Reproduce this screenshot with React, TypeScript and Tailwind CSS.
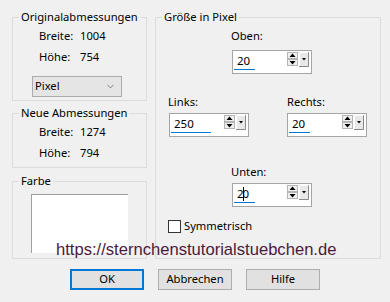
import { ChevronDown } from 'lucide-react';

const ui = { fontFamily: '"Noto Sans", "Open Sans", sans-serif' };

function SpinArrows() {
    return (
        <div className="flex items-start gap-[1px] mt-[1px]">
            <svg width="11" height="14" viewBox="0 0 11 14">
                <rect x="0.5" y="0.5" width="10" height="6" fill="#f0f0f0" stroke="#b5b5b5" />
                <rect x="0.5" y="7.5" width="10" height="6" fill="#f0f0f0" stroke="#b5b5b5" />
                <path d="M5.5 1.5 L8.5 5 L2.5 5 Z" fill="#000" />
                <path d="M2.5 9 L8.5 9 L5.5 12.5 Z" fill="#000" />
            </svg>
            <svg width="10" height="15" viewBox="0 0 10 15">
                <rect x="0" y="0" width="10" height="15" fill="#e8e8e8" />
                <path d="M0 0.5 H9.5 V14.5 H0" fill="none" stroke="#8a8a8a" />
                <path d="M0.5 14 V0.5 H9" fill="none" stroke="#ffffff" />
                <path d="M3 6 L7 6 L5 8.5 Z" fill="#000" />
            </svg>
        </div>
    );
}

function Spinner({ value, bar, caret }: { value: string; bar: number; caret?: boolean }) {
    return (
        <div className="w-[80px] h-[24px] bg-white border border-[#a5a5a5] flex flex-col">
            <div className="flex justify-between pl-[4px] pr-[2px]">
                {caret ? (
                    <span className="flex items-center text-[11.5px] leading-[17px] mt-[1px]">
                        {value.slice(0, 1)}
                        <span className="w-[1px] h-[14px] bg-black -mx-[1px]" />
                        {value.slice(1)}
                    </span>
                ) : (
                    <span className="text-[11.5px] leading-[17px] mt-[1px]">{value}</span>
                )}
                <SpinArrows />
            </div>
            <div className="ml-[1px] mt-auto mb-[3px] h-[3px] bg-[#0078d7]" style={{ width: bar }} />
        </div>
    );
}

function Group({ title, className, children }: { title: string; className?: string; children: React.ReactNode }) {
    return (
        <fieldset className={`border border-[#dcdcdc] ${className ?? ''}`}>
            <legend className="ml-[6px] px-[2px] text-[11.2px] leading-[16px]">{title}</legend>
            {children}
        </fieldset>
    );
}

function ValueRow({ label, value, className }: { label: string; value: string; className?: string }) {
    return (
        <div className={`flex pl-[26px] text-[11.2px] leading-[16px] ${className ?? ''}`}>
            <span className="w-[41px]">{label}</span>
            <span>{value}</span>
        </div>
    );
}

export default function App() {
    return (
        <div className="relative w-[390px] h-[302px] bg-[#f0f0f0] text-black overflow-hidden" style={ui}>
            <div className="flex pt-[9px] pl-[12px] gap-[8px]">
                <div className="w-[135px] flex flex-col">
                    <Group title="Originalabmessungen" className="pb-[3px]">
                        <ValueRow label="Breite:" value="1004" className="mt-[3px]" />
                        <ValueRow label="Höhe:" value="754" className="mt-[5px]" />
                        <div className="ml-[19px] mt-[11px] w-[90px] h-[21px] bg-[#e5e5e5] border border-[#acacac] flex items-center justify-between pl-[2px] pr-[5px] text-[11.2px]">
                            <span>Pixel</span>
                            <ChevronDown size={11} strokeWidth={1.3} className="text-[#404040]" />
                        </div>
                    </Group>
                    <Group title="Neue Abmessungen" className="mt-[4px] pb-[6px]">
                        <ValueRow label="Breite:" value="1274" className="mt-[3px]" />
                        <ValueRow label="Höhe:" value="794" className="mt-[5px]" />
                    </Group>
                    <Group title="Farbe" className="mt-[5px] pb-[5px]">
                        <div className="ml-[18px] mt-[5px] w-[97px] h-[59px] bg-white border-l border-t border-[#a0a0a0]" />
                    </Group>
                </div>
                <Group title="Größe in Pixel" className="w-[226px] h-[250px]">
                    <div className="ml-[75px] mt-[3px] text-[11.2px] leading-[16px]">Oben:</div>
                    <div className="ml-[76px] mt-[6px]">
                        <Spinner value="20" bar={21} />
                    </div>
                    <div className="flex mt-[20px] ml-[12px]">
                        <div className="w-[119px] flex flex-col">
                            <span className="text-[11.2px] leading-[16px]">Links:</span>
                            <div className="ml-[1px] mt-[3px]">
                                <Spinner value="250" bar={40} />
                            </div>
                        </div>
                        <div className="flex flex-col">
                            <span className="text-[11.2px] leading-[16px]">Rechts:</span>
                            <div className="mt-[3px]">
                                <Spinner value="20" bar={21} />
                            </div>
                        </div>
                    </div>
                    <div className="ml-[75px] mt-[27px] text-[11.2px] leading-[16px]">Unten:</div>
                    <div className="ml-[76px] mt-[3px]">
                        <Spinner value="20" bar={21} caret />
                    </div>
                    <div className="flex items-center ml-[12px] mt-[11px] gap-[3px]">
                        <div className="w-[13px] h-[13px] bg-white border border-[#333]" />
                        <span className="text-[11.2px] leading-[16px]">Symmetrisch</span>
                    </div>
                </Group>
            </div>
            <div className="flex pl-[70px] gap-[14px] mt-[10px] text-[11.2px]">
                <button className="w-[74px] h-[21px] bg-[#e1e1e1] border-2 border-[#0078d7]">OK</button>
                <button className="w-[74px] h-[21px] bg-[#e1e1e1] border border-[#adadad]">Abbrechen</button>
                <button className="w-[74px] h-[21px] bg-[#e1e1e1] border border-[#adadad]">Hilfe</button>
            </div>
            <div
                className="absolute left-[56px] top-[240px] text-[16.6px] leading-[19px] text-[#4a1a3c]"
                style={{ fontFamily: '"Liberation Sans", Arial, sans-serif' }}
            >
                https://sternchenstutorialstuebchen.de
            </div>
        </div>
    );
}
